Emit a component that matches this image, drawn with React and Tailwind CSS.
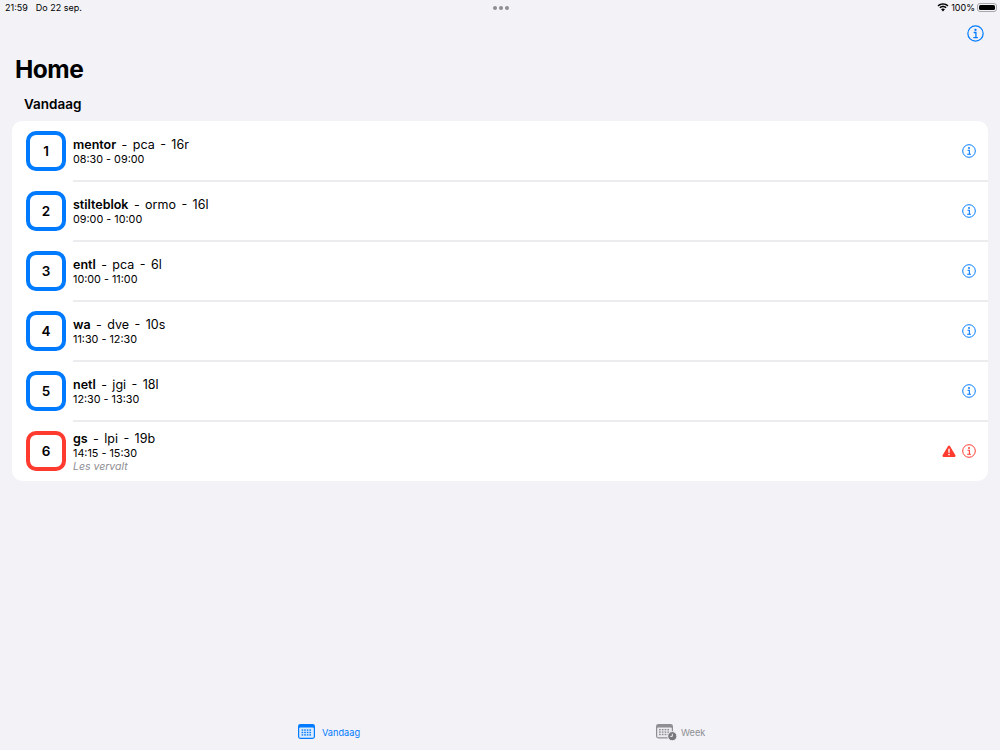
import { Fragment } from 'react';

const lessons = [
  { nr: 1, vak: 'mentor', docent: 'pca', lokaal: '16r', tijd: '08:30 - 09:00' },
  { nr: 2, vak: 'stilteblok', docent: 'ormo', lokaal: '16l', tijd: '09:00 - 10:00' },
  { nr: 3, vak: 'entl', docent: 'pca', lokaal: '6l', tijd: '10:00 - 11:00' },
  { nr: 4, vak: 'wa', docent: 'dve', lokaal: '10s', tijd: '11:30 - 12:30' },
  { nr: 5, vak: 'netl', docent: 'jgi', lokaal: '18l', tijd: '12:30 - 13:30' },
  { nr: 6, vak: 'gs', docent: 'lpi', lokaal: '19b', tijd: '14:15 - 15:30', vervalt: true },
];

const InfoIcon = ({ className }) => (
  <svg viewBox="0 0 24 24" className={className} fill="none" stroke="currentColor">
    <circle cx="12" cy="12" r="10.8" strokeWidth="1.7" />
    <circle cx="12" cy="6.9" r="1.6" fill="currentColor" stroke="none" />
    <path d="M9.4 10.6h3.2v7M8.9 17.7h6.4" strokeWidth="1.8" />
  </svg>
);

const WarningIcon = () => (
  <svg viewBox="0 0 16 14" className="w-[14px] h-[12px] text-[#ff3b30]">
    <path d="M8 .6c.5 0 .9.3 1.2.8l6.3 10.7c.5.9-.1 1.9-1.1 1.9H1.6c-1 0-1.6-1-1.1-1.9L6.8 1.4C7.1.9 7.5.6 8 .6z" fill="currentColor" />
    <rect x="7.2" y="4" width="1.6" height="5.4" rx=".8" fill="#fff" />
    <circle cx="8" cy="11.1" r="1" fill="#fff" />
  </svg>
);

const WifiIcon = () => (
  <svg viewBox="0 0 16 12" className="w-[12px] h-[9px]" fill="#000">
    <path d="M8 2.2c2.3 0 4.4.9 6 2.4l1.3-1.4C13.4 1.3 10.8.2 8 .2S2.6 1.3.7 3.2L2 4.6c1.6-1.5 3.7-2.4 6-2.4z" />
    <path d="M8 5.8c1.3 0 2.5.5 3.4 1.3l1.4-1.4C11.5 4.5 9.8 3.8 8 3.8s-3.5.7-4.8 1.9l1.4 1.4C5.5 6.3 6.7 5.8 8 5.8z" />
    <path d="M8 7.4c-1 0-1.9.4-2.6 1L8 11.3l2.6-2.9c-.7-.6-1.6-1-2.6-1z" />
  </svg>
);

const CalendarToday = () => (
  <svg viewBox="0 0 17 15" className="w-[17px] h-[15px]">
    <rect x="0" y="0" width="17" height="15" rx="2.4" fill="#007aff" />
    <rect x="1.2" y="3.6" width="14.6" height="10.2" rx="1" fill="#dcecff" />
    {[3.6, 6.2, 8.8, 11.4].map((x) =>
      [5.4, 7.8, 10.2].map((y) => (
        <rect key={`${x}-${y}`} x={x} y={y} width="1.6" height="1.4" fill="#007aff" />
      ))
    )}
  </svg>
);

const CalendarWeek = () => (
  <svg viewBox="0 0 22 18" className="w-[22px] h-[18px]">
    <rect x="0" y="1" width="17" height="14.5" rx="2.4" fill="#8e8e93" />
    <rect x="1.2" y="4.5" width="14.6" height="9.8" rx="1" fill="#ececf0" />
    {[3, 5.8, 8.6, 11.4].map((x) =>
      [6, 8.4, 10.8].map((y) => (
        <rect key={`${x}-${y}`} x={x} y={y} width="1.7" height="1.4" fill="#8e8e93" />
      ))
    )}
    <circle cx="16.3" cy="13.2" r="4.6" fill="#77777c" stroke="#f2f2f7" strokeWidth="1" />
    <path d="M16.3 10.8v2.6h-2" fill="none" stroke="#fff" strokeWidth=".9" />
  </svg>
);

const LessonRow = ({ lesson }) => {
  const tint = lesson.vervalt ? 'text-[#ff3b30]' : 'text-[#007aff]';
  return (
    <div className="h-[60px] flex items-center pl-[14px] pr-[12px]">
      <div
        className={`w-10 h-10 shrink-0 border-[4px] rounded-[10px] flex items-center justify-center font-semibold text-[13.5px] text-black ${
          lesson.vervalt ? 'border-[#ff3b30]' : 'border-[#007aff]'
        }`}
      >
        {lesson.nr}
      </div>
      <div className="ml-[7px] pt-[2px] flex-1 text-black">
        <div className="text-[12.5px] leading-[14px] whitespace-pre [word-spacing:-0.8px]">
          <span className="font-semibold">{lesson.vak}</span>
          {`  -  ${lesson.docent}  -  ${lesson.lokaal}`}
        </div>
        <div className="mt-px text-[10.8px] leading-[14px]">{lesson.tijd}</div>
        {lesson.vervalt && (
          <div className="text-[10.5px] leading-[12px] italic text-[#8e8e93]">Les vervalt</div>
        )}
      </div>
      {lesson.vervalt && (
        <div className="mr-[6px] flex">
          <WarningIcon />
        </div>
      )}
      <InfoIcon className={`w-[14px] h-[14px] ${tint}`} />
    </div>
  );
};

const App = () => {
  return (
    <div className="w-[1000px] h-[750px] overflow-hidden bg-[#f2f2f7] flex flex-col font-['Inter','Liberation_Sans',sans-serif]">
      <div className="h-[14px] pt-px pl-[5px] pr-[3px] flex items-center justify-between text-[9px] text-black">
        <div className="flex gap-[8px] w-[200px]">
          <span>21:59</span>
          <span>Do 22 sep.</span>
        </div>
        <div className="flex gap-[2px] -ml-[1px]">
          <span className="w-[4px] h-[4px] rounded-full bg-[#8e8e93]" />
          <span className="w-[4px] h-[4px] rounded-full bg-[#8e8e93]" />
          <span className="w-[4px] h-[4px] rounded-full bg-[#8e8e93]" />
        </div>
        <div className="flex items-center justify-end gap-[2px] w-[200px]">
          <WifiIcon />
          <span className="mr-[-1px]">100%</span>
          <div className="ml-[1px] w-[20px] h-[9px] rounded-[3px] border border-[#a8a8ac] p-[1px] flex">
            <div className="flex-1 bg-black rounded-[1.5px]" />
          </div>
        </div>
      </div>

      <div className="flex justify-end pt-[11px] pr-[16px]">
        <InfoIcon className="w-[17px] h-[17px] text-[#007aff]" />
      </div>

      <h1 className="pl-[15px] mt-[11px] text-[24.5px] leading-[32px] font-bold tracking-[-0.5px] text-black">Home</h1>
      <h2 className="pl-6 mt-[9px] text-[13.5px] leading-[20px] font-semibold text-black">Vandaag</h2>

      <div className="mx-3 mt-[7px] bg-white rounded-[10px]">
        {lessons.map((lesson, i) => (
          <Fragment key={lesson.nr}>
            {i > 0 && <div className="ml-[61px] h-[2px] -my-px bg-[#ececee]" />}
            <LessonRow lesson={lesson} />
          </Fragment>
        ))}
      </div>

      <div className="mt-auto h-[36px] flex pl-[298px] pt-[9px]">
        <div className="w-[358px] flex items-start gap-[7px] text-[#007aff] text-[9.2px] leading-[19px]">
          <div className="pt-[1px]">
            <CalendarToday />
          </div>
          <span>Vandaag</span>
        </div>
        <div className="flex items-start gap-[3px] text-[#8e8e93] text-[9.2px] leading-[19px]">
          <CalendarWeek />
          <span>Week</span>
        </div>
      </div>
    </div>
  );
};

export default App;
